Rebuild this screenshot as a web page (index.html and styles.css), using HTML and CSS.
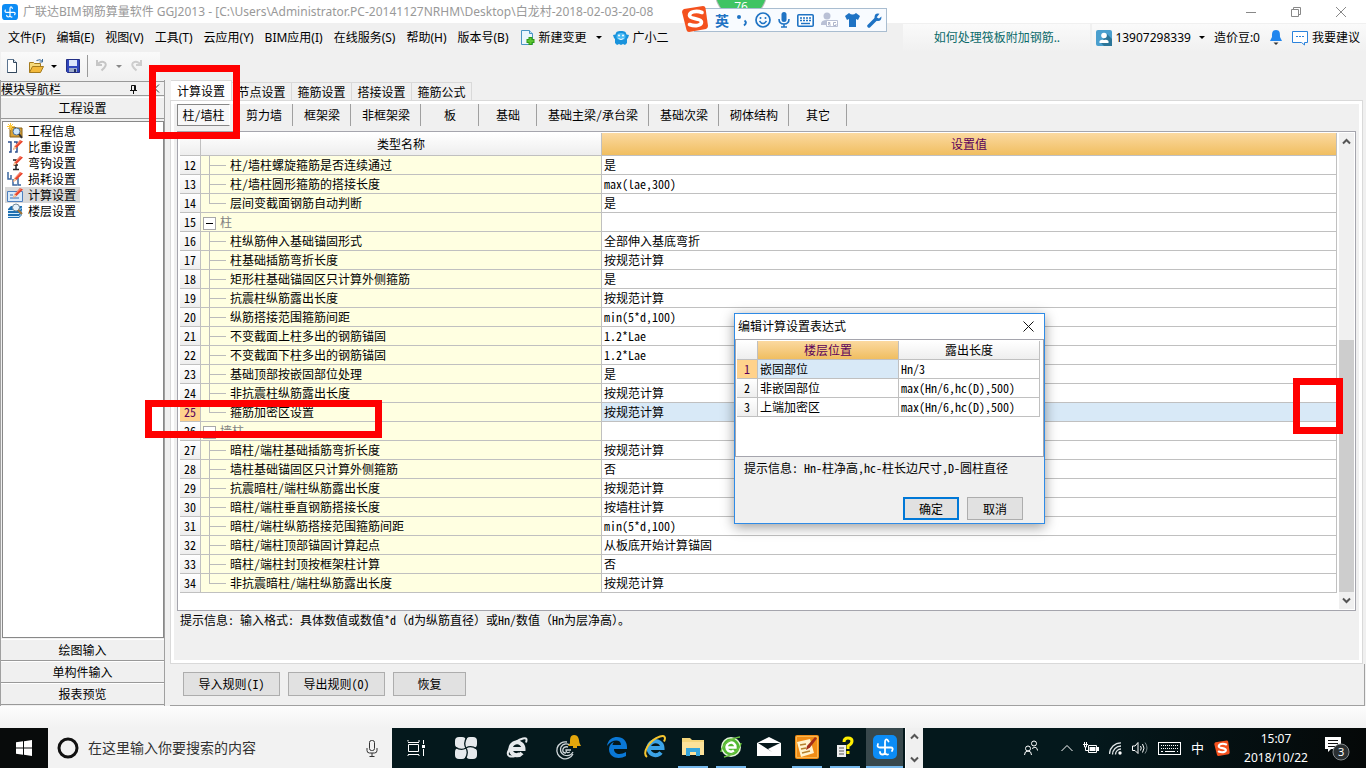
FILE: index.html
```html
<!DOCTYPE html>
<html lang="zh-CN">
<head>
<meta charset="utf-8">
<title>广联达BIM钢筋算量软件 GGJ2013</title>
<link rel="stylesheet" href="styles.css">
</head>
<body>
<svg class="defs" width="0" height="0" aria-hidden="true">
  <symbol id="bim" viewBox="0 0 24 24"><rect width="24" height="24" rx="5" fill="#0c8cf5"/><path d="M15.500 6.500Q14.500 4 13 4.500 12 5 12 7v10q0 2.500-2.500 2.500T7 17M5 9q-1.500 3.500 2 3.500h10.500q3.500 0 1.500 3.500M12 18q1 2 3 1.500" fill="none" stroke="#fff" stroke-width="1.800" stroke-linecap="round"/></symbol>
  <symbol id="sogou" viewBox="0 0 26 27"><path d="M2 4 21 1q2 0 2.500 2L26 21q0 2-2 3L7 27q-2 0-2.500-2L0 7q0-2 2-3z" fill="#f4511e"/><path d="M20 7.500C14 5 7.500 7 7.500 10.500c0 4 12 2.500 12 6.500 0 4-7 4.500-12 2.500" fill="none" stroke="#fff" stroke-width="3.600" stroke-linecap="round"/></symbol>
  <symbol id="pencil" viewBox="0 0 16 16"><path d="m6 11 1.500-4L13 1l3 1.500L9.500 9z" fill="#e8432c"/><path d="m8 7 6-5.500" stroke="#ff9b80"/><path d="m6 11 1.500-4 2 2z" fill="#f3d2a0"/></symbol>
</svg>

<header class="titlebar">
  <svg class="i16"><use href="#bim"/></svg>
  <span class="title">广联达BIM钢筋算量软件 GGJ2013 - [C:\Users\Administrator.PC-20141127NRHM\Desktop\白龙村-2018-02-03-20-08</span>
  <div class="winctl">
    <button aria-label="最小化"><svg width="12" height="12"><path d="M1 6.500h10" stroke="#888" fill="none"/></svg></button>
    <button aria-label="还原"><svg width="12" height="12"><path d="M1.500 3.500h7v7h-7zM3.500 3V1.500h7v7H9" stroke="#888" fill="none"/></svg></button>
    <button aria-label="关闭"><svg width="12" height="12"><path d="m1 1 10 10M11 1 1 11" stroke="#888" fill="none"/></svg></button>
  </div>
</header>

<nav class="menubar">
  <button>文件(F)</button><button>编辑(E)</button><button>视图(V)</button><button>工具(T)</button><button>云应用(Y)</button><button>BIM应用(I)</button><button>在线服务(S)</button><button>帮助(H)</button><button>版本号(B)</button>
  <button class="withicon"><svg width="15" height="17"><path d="M1.500 1.500h8l3 3v11h-11z" fill="#eaf5fd" stroke="#4a94c4"/><path d="M9.500 1.500v3h3" fill="#bfe0f5" stroke="#4a94c4"/><path d="M10.500 8v8M6.500 12h8" stroke="#2f9a16" stroke-width="4"/><path d="M10.500 9v6M7.500 12h6" stroke="#5cc533" stroke-width="2"/></svg>新建变更<i class="caret"></i></button>
  <button class="withicon"><svg width="16" height="16"><path d="M8 1c4 0 5 1 5.500 3.500L16 5l-1 3-1 1v4l-2 2-2-1-2 1-2-1-2 1-2-2V9L1 8 0 5l2.500-.5C3 2 4 1 8 1z" fill="#1993dc"/><ellipse cx="8" cy="6.500" rx="4.500" ry="3.500" fill="#4cbcf5"/><path d="M5.500 8.500q2.500 2 5 0" stroke="#fff" fill="none"/><circle cx="6" cy="5.500" r="1" fill="#fff"/><circle cx="10" cy="5.500" r="1" fill="#fff"/></svg>广小二</button>
  <a class="tip" href="#">如何处理筏板附加钢筋..</a>
  <div class="account">
    <button><svg width="16" height="16"><rect width="16" height="16" rx="2" fill="#4a9fce"/><path d="m5 13 6-9 5 5v7H8z" fill="#2c7699"/><circle cx="8" cy="5.500" r="2.800" fill="#fff"/><path d="M3.500 13V11q2-2 4.500-1 2.500-1 4.500 1v2z" fill="#fff"/></svg>13907298339<i class="caret"></i></button>
    <span>造价豆:0</span>
    <button aria-label="通知"><svg width="14" height="16"><path d="M7 0c4 0 4 3 4 7l2 4H1l2-4c0-4 0-7 4-7z" fill="#2186ee"/><path d="M4.500 12.500h5L7 15z" fill="#333"/></svg></button>
    <button><svg width="17" height="16"><path d="M.5 1.500h15v11h-3V15l-3-2.500h-9z" fill="#fff" stroke="#2b83dc"/><path d="M4 6.500h2m1 0h2m1 0h2" stroke="#2b83dc"/></svg>我要建议</button>
  </div>
</nav>

<div class="toolbar">
  <div class="tools">
    <button aria-label="新建"><svg width="16" height="16"><path d="M3.500 1.500h6l3 3v10h-9z" fill="#fff" stroke="#5b7490"/><path d="M9.500 1.500v3h3" fill="#d5e2ef" stroke="#33475c"/><path d="M12.500 4.500v10h-9" fill="none" stroke="#33475c"/></svg></button>
    <button aria-label="打开"><svg width="17" height="16"><path d="M1.500 14.500v-10h4l1 1h6v3" fill="#f6d97a" stroke="#a57b1e"/><path d="m1.500 14.500 3-6h11l-3 6z" fill="#f3b93b" stroke="#a57b1e"/><path d="M8.500 2.500q4-2 6 1m0-2.500v3h-3" fill="none" stroke="#3d6b99"/></svg><i class="caret"></i></button>
    <button aria-label="保存"><svg width="16" height="16"><path d="M1.500 1.500h13v13h-12l-1-1z" fill="#2f46bd" stroke="#232f85"/><path d="M4 2h8v6H4z" fill="#dce6fa"/><path d="M4 10h8v4H4z" fill="#9eacc9"/><path d="M9 11h2v3H9z" fill="#222f60"/></svg></button>
    <span class="vsep"></span>
    <button aria-label="撤销" disabled><svg width="16" height="16"><path d="M3 2v5h5M3 7q3-4 6.500-3 4 1.500 1 5.500l-3 3" fill="none" stroke="#c6c6c6" stroke-width="2"/></svg><i class="caret dim"></i></button>
    <button aria-label="重做" disabled><svg width="16" height="16"><path d="M13 2v5H8M13 7Q10 3 6.500 4q-4 1.500-1 5.500l3 3" fill="none" stroke="#cdcdcd" stroke-width="2"/></svg></button>
  </div>
</div>

<main class="work">
  <aside class="side">
    <div class="sidehead"><span>模块导航栏</span><button aria-label="固定"><svg width="9" height="10"><path d="M2.500 6V1.500h4V6M1 6.500h7M4.500 7v3M5.500 2v4" fill="none" stroke="#111"/></svg></button><button aria-label="收起"><svg width="6" height="9"><path d="M5 .5 1 4.500l4 4" fill="none" stroke="#333"/></svg></button></div>
    <button class="sidebtn">工程设置</button>
    <ul class="sidelist">
      <li><svg class="i16"><path d="M3 4h5l1 1h6v9H3z" fill="#d9a234" stroke="#86601b"/><path d="M1 1l5 5M6 1 1 6M3.500 0v7M0 3.500h7" stroke="#ffc83a"/><circle cx="9.500" cy="8.500" r="3.500" fill="#cfe8fb" stroke="#4b6f9a"/><path d="m12 11 3 4" stroke="#333" stroke-width="2"/></svg><span>工程信息</span></li>
      <li><svg class="i16"><path d="M1 3h3v10H2M7 3h3v10H8" fill="none" stroke="#2c4f8e" stroke-width="1.500"/><use href="#pencil" width="16" height="16"/></svg><span>比重设置</span></li>
      <li><svg class="i16"><path d="M6 5h3v9M6 14.500h6M7 10h4" fill="none" stroke="#222" stroke-width="1.500"/><use href="#pencil" width="16" height="16"/></svg><span>弯钩设置</span></li>
      <li><svg class="i16"><path d="M1 1v7h3V4M6 8v6h4M11 7v7h3" fill="none" stroke="#3b67a0" stroke-width="1.500"/><use href="#pencil" width="16" height="16"/></svg><span>损耗设置</span></li>
      <li class="on"><svg class="i16"><path d="M.5 4.500h15v10H.5z" fill="#d9ebfb" stroke="#4d7fbe"/><path d="M3 8h3m-3 3h9" stroke="#3b6fb0"/><use href="#pencil" width="16" height="16"/></svg><span>计算设置</span></li>
      <li><svg class="i16"><path d="m1 6 3-3h11v9l-3 3H1z" fill="#1d6fb2"/><path d="M1 7.500h11l3-3M1 10.500h11l3-3M1 13.500h11l3-3" fill="none" stroke="#d4ecfb"/><circle cx="9" cy="4.500" r="3.500" fill="#e6f2fa" stroke="#6c8596"/><path d="m11 7 4 4" stroke="#a37335" stroke-width="2"/></svg><span>楼层设置</span></li>
    </ul>
    <button class="sidebtn">绘图输入</button>
    <button class="sidebtn">单构件输入</button>
    <button class="sidebtn">报表预览</button>
  </aside>

  <section class="content">
    <div class="tabs"><button class="on">计算设置</button><button>节点设置</button><button>箍筋设置</button><button>搭接设置</button><button>箍筋公式</button></div>
    <div class="panel">
      <div class="subtabs"><button class="on">柱/墙柱</button><button>剪力墙</button><button>框架梁</button><button>非框架梁</button><button>板</button><button>基础</button><button>基础主梁/承台梁</button><button>基础次梁</button><button>砌体结构</button><button>其它</button></div>
      <div class="gridbox">
        <table class="grid main">
          <colgroup><col class="cnum"><col class="cname"><col></colgroup>
          <thead><tr><th></th><th>类型名称</th><th class="hot">设置值</th></tr></thead>
          <tbody>
            <tr><th>12</th><td class="leaf">柱/墙柱螺旋箍筋是否连续通过</td><td>是</td></tr>
            <tr><th>13</th><td class="leaf">柱/墙柱圆形箍筋的搭接长度</td><td>max(lae,300)</td></tr>
            <tr><th>14</th><td class="leaf last">层间变截面钢筋自动判断</td><td>是</td></tr>
            <tr><th>15</th><td class="group"><button aria-label="折叠"></button>柱</td><td></td></tr>
            <tr><th>16</th><td class="leaf">柱纵筋伸入基础锚固形式</td><td>全部伸入基底弯折</td></tr>
            <tr><th>17</th><td class="leaf">柱基础插筋弯折长度</td><td>按规范计算</td></tr>
            <tr><th>18</th><td class="leaf">矩形柱基础锚固区只计算外侧箍筋</td><td>是</td></tr>
            <tr><th>19</th><td class="leaf">抗震柱纵筋露出长度</td><td>按规范计算</td></tr>
            <tr><th>20</th><td class="leaf">纵筋搭接范围箍筋间距</td><td>min(5*d,100)</td></tr>
            <tr><th>21</th><td class="leaf">不变截面上柱多出的钢筋锚固</td><td>1.2*Lae</td></tr>
            <tr><th>22</th><td class="leaf">不变截面下柱多出的钢筋锚固</td><td>1.2*Lae</td></tr>
            <tr><th>23</th><td class="leaf">基础顶部按嵌固部位处理</td><td>是</td></tr>
            <tr><th>24</th><td class="leaf">非抗震柱纵筋露出长度</td><td>按规范计算</td></tr>
            <tr class="sel"><th>25</th><td class="leaf last">箍筋加密区设置</td><td>按规范计算</td></tr>
            <tr><th>26</th><td class="group"><button aria-label="折叠"></button>墙柱</td><td></td></tr>
            <tr><th>27</th><td class="leaf">暗柱/端柱基础插筋弯折长度</td><td>按规范计算</td></tr>
            <tr><th>28</th><td class="leaf">墙柱基础锚固区只计算外侧箍筋</td><td>否</td></tr>
            <tr><th>29</th><td class="leaf">抗震暗柱/端柱纵筋露出长度</td><td>按规范计算</td></tr>
            <tr><th>30</th><td class="leaf">暗柱/端柱垂直钢筋搭接长度</td><td>按墙柱计算</td></tr>
            <tr><th>31</th><td class="leaf">暗柱/端柱纵筋搭接范围箍筋间距</td><td>min(5*d,100)</td></tr>
            <tr><th>32</th><td class="leaf">暗柱/端柱顶部锚固计算起点</td><td>从板底开始计算锚固</td></tr>
            <tr><th>33</th><td class="leaf">暗柱/端柱封顶按框架柱计算</td><td>否</td></tr>
            <tr><th>34</th><td class="leaf last">非抗震暗柱/端柱纵筋露出长度</td><td>按规范计算</td></tr>
          </tbody>
        </table>
        <div class="scroll">
          <button aria-label="向上"><svg width="9" height="7"><path d="m1 5.500 3.500-3.500L8 5.500" fill="none" stroke="#555" stroke-width="2"/></svg></button>
          <div class="track"><div class="thumb"></div></div>
          <button aria-label="向下"><svg width="9" height="7"><path d="m1 1.500 3.500 3.500L8 1.500" fill="none" stroke="#555" stroke-width="2"/></svg></button>
        </div>
      </div>
      <p class="hint">提示信息: 输入格式: 具体数值或数值*d（d为纵筋直径）或Hn/数值（Hn为层净高）。</p>
    </div>
    <div class="actions"><button class="wide">导入规则(I)</button><button class="wide">导出规则(O)</button><button>恢复</button></div>
  </section>
</main>
<div class="filler"></div>

<footer class="taskbar">
  <button class="start" aria-label="开始"><svg width="16" height="16"><path d="M0 2.300 7 1.300v6.200H0zM8 1.200 16 0v7.500H8zM0 8.500h7v6.200l-7-1zM8 8.500h8V16l-8-1.200z" fill="#fff"/></svg></button>
  <label class="search">
    <svg width="22" height="22"><circle cx="11" cy="11" r="9" fill="none" stroke="#111" stroke-width="3"/></svg>
    <input type="text" placeholder="在这里输入你要搜索的内容" aria-label="搜索">
    <svg width="12" height="17"><rect x="3.500" y=".5" width="5" height="10" rx="2" fill="none" stroke="#333"/><path d="M1 8v2.500q0 2.500 2.500 2.500h5q2.500 0 2.500-2.500V8M6 13v3M3.500 16.500h5" fill="none" stroke="#333"/></svg>
  </label>
  <div class="pins">
    <button aria-label="任务视图"><svg width="18" height="16"><path d="M1 1.500V0M1 2.500h11M12 2V0M1 14.500h11M1 16v-1M12 16v-1M1.500 4.500h10v7h-10zM16.500 0v4M16.500 9v7" fill="none" stroke="#fff"/><rect x="15" y="5" width="3" height="3" fill="#fff"/></svg></button>
    <button aria-label="应用"><svg width="22" height="22" viewBox="0 0 22 22"><g fill="#e6e9ec"><rect width="11" height="11" rx="4"/><rect x="11" width="11" height="11" rx="4"/><rect y="11" width="11" height="11" rx="4"/><rect x="11" y="11" width="11" height="11" rx="4"/><rect x="7" y="7" width="8" height="8"/></g><path d="M11 11Q8 6 12 0M11 11q5-3 11 1M11 11q3 5-1 11M11 11q-5 3-11-1" fill="none" stroke="#04181c" stroke-width="1.300"/></svg></button>
    <button aria-label="浏览器"><svg width="24" height="24" viewBox="0 0 24 24"><path d="M6 13h12.500A6.500 6.500 0 1 0 17 17" fill="none" stroke="#e6e9ec" stroke-width="4"/><path d="M4 20C0 17 8 5 18 2.500c4-1 4 1 3 4M4 20q5 2 10-3" fill="none" stroke="#e6e9ec" stroke-width="2"/></svg></button>
    <button aria-label="提醒"><svg width="28" height="28" viewBox="0 0 28 28"><path d="M13 8A8.500 8.500 0 1 0 19 20M17 16h-5q0 4 4 2M16 11q-6-3-9 2-2 5 3 8 6 2 9-3M14 13q-4-1-5 2-1 4 3 4" fill="none" stroke="#cfd6d9" stroke-width="1.300"/><path d="M20 1c5 0 5 5 5.500 8l1.500 3H14l2-3c0-4 0-8 4-8z" fill="#e3a60c"/><path d="M19 13h4" stroke="#e3a60c" stroke-width="2"/></svg></button>
  </div>
  <div class="apps">
    <button aria-label="Edge"><svg width="22" height="22" viewBox="0 0 22 22"><path d="M1 10C2 3 7 1 11 1c6 0 10 4 10 10v2H8c0 6 7 6 12 3v4C13 24 3 22 3 13c0-3 2-6 5-7-1 1-1.500 2-1.500 3H15c0-6-9-6-14 1z" fill="#0a78d6"/></svg></button>
    <button aria-label="Internet Explorer"><svg width="24" height="24" viewBox="0 0 24 24"><path d="M7 13h12.500A7 7 0 1 0 18 17.500" fill="none" stroke="#3ba3e6" stroke-width="4"/><path d="M4 22C-1 18 6 5 17 1.500c5-1.500 6 1 4 5" fill="none" stroke="#f5c52f" stroke-width="2"/></svg></button>
    <button class="open" aria-label="文件资源管理器"><svg width="22" height="20" viewBox="0 0 22 20"><path d="M0 1h8l2 2h12v15H0z" fill="#f5d67c"/><path d="M0 5h22v13H0z" fill="#fce29a"/><path d="M4 19v-8h14v8h-4v-4H8v4z" fill="#36a6dc"/></svg></button>
    <button class="open" aria-label="360浏览器"><svg width="24" height="24" viewBox="0 0 24 24"><circle cx="12" cy="12" r="10" fill="#e6f5dd"/><circle cx="12" cy="12" r="8.500" fill="#52b832"/><path d="M7.500 12.500h9a4.500 4.500 0 1 0-1.500 3" fill="none" stroke="#fff" stroke-width="2.500"/><path d="M2 17C3 10 12 3 21 2M22 8c-1 7-10 13-17 14" fill="none" stroke="#6cc243" stroke-width="1.500"/></svg></button>
    <button aria-label="邮件"><svg width="24" height="20" viewBox="0 0 24 20"><path d="M0 6 12 0l12 6v13H0z" fill="#fff"/><path d="M1 6h22L11 12l4 3z" fill="#06181c"/></svg></button>
    <button class="open" aria-label="便签"><svg width="24" height="24" viewBox="0 0 24 24"><rect width="24" height="24" rx="2" fill="#f08c16"/><path d="M1.500 1.500h21v21h-21z" fill="none" stroke="#f9b64c"/><path d="m2 7 13-3 4 14-13 4z" fill="#fff3cf"/><path d="m5 10 6-1m-5 5 5-1m-4 5 8-2" stroke="#b6812e" stroke-width="1.500"/><path d="m11 15 1-4 8-9 2 1.500-7 9z" fill="#a32e19"/></svg></button>
    <button class="open" aria-label="帮助"><svg width="18" height="22" viewBox="0 0 18 22"><path d="M1 9h9v12H1z" fill="#eee"/><path d="M3 12h5m-5 3h5m-5 3h5" stroke="#555"/><path d="M8 6q0-4 4-4t4 3q0 3-4 5v3M12 15v3" fill="none" stroke="#ffef00" stroke-width="3"/></svg></button>
    <button class="open current" aria-label="广联达"><svg width="24" height="24"><use href="#bim"/></svg></button>
  </div>
  <div class="spin"><button aria-label="上一页"><svg width="9" height="7"><path d="m1 5.500 3.500-3.500L8 5.500" fill="none" stroke="#555" stroke-width="2"/></svg></button><button aria-label="下一页"><svg width="9" height="7"><path d="m1 1.500 3.500 3.500L8 1.500" fill="none" stroke="#555" stroke-width="2"/></svg></button></div>
  <div class="tray">
    <svg width="16" height="16"><circle cx="11" cy="3.500" r="2.500" fill="none" stroke="#fff"/><circle cx="5" cy="8.500" r="2.500" fill="none" stroke="#fff"/><path d="M1.500 15q0-4 3.500-4t3.500 4M9 8.500q5-3 5.500 2" fill="none" stroke="#fff"/></svg>
    <svg class="up" width="12" height="8"><path d="m.5 7 5.500-5.500L11.500 7" fill="none" stroke="#fff"/></svg>
    <svg width="16" height="12"><path d="M5.500 3.500h8v7h-8z" fill="none" stroke="#fff"/><path d="M6.500 5h6v4h-6z M14 5h2v4h-2z" fill="#fff"/><path d="M0 2.500h5M1.500 0v5h2V0M2.500 5v3.500h3" fill="none" stroke="#fff"/></svg>
    <svg width="13" height="13"><path d="M.5 12A11.500 11.500 0 0 1 12 .8M3.500 12.500A8.500 8.500 0 0 1 12 4M6.500 12.500A5.500 5.500 0 0 1 12 7" fill="none" stroke="#dfe5e6" stroke-width="1.300"/><circle cx="11" cy="11" r="1.700" fill="#fff"/></svg>
    <svg width="16" height="14"><path d="M.5 5h2.500l3-3.500v11L3 9.500H.5z" fill="none" stroke="#fff"/><path d="M8.500 5q1.500 2 0 4.500M10.500 3q3 4 0 8.500" fill="none" stroke="#fff"/><path d="M13 1.500q4 5.500 0 11" fill="none" stroke="#7d898c"/></svg>
    <svg width="23" height="13"><rect x=".5" y=".5" width="22" height="12" fill="none" stroke="#fff"/><path d="M3 3.500h17M3 6.500h17" stroke="#fff" stroke-dasharray="1 1"/><path d="M3 9.500h2m2 0h10m2 0h1" stroke="#fff"/></svg>
    <span class="ime">中</span>
    <svg width="16" height="16"><use href="#sogou"/></svg>
  </div>
  <div class="clock"><span>15:07</span><span>2018/10/22</span></div>
  <button class="notify" aria-label="通知中心"><svg width="25" height="25" viewBox="0 0 25 25"><path d="M0 1h16v12H6l-3 3v-3H0z" fill="#fff"/><path d="M3 4.500h10m-10 3h10m-10 3h7" stroke="#111"/><circle cx="16" cy="16" r="8" fill="#2b3032" stroke="#84898b"/></svg><span>3</span></button>
</footer>

<div class="ball">76</div>
<div class="imebar">
  <svg class="logo" width="26" height="27"><use href="#sogou"/></svg>
  <b>英</b>
  <svg width="12" height="16"><circle cx="3" cy="5" r="2" fill="#1f73c4"/><path d="M8.500 8.500q3 2-.5 5" fill="none" stroke="#1f73c4" stroke-width="2"/></svg>
  <svg width="16" height="16"><circle cx="8" cy="8" r="7" fill="none" stroke="#1f73c4" stroke-width="1.700"/><path d="M4.500 9q3.500 5 7 0" fill="none" stroke="#1f73c4" stroke-width="1.500"/><circle cx="5.500" cy="6" r="1" fill="#1f73c4"/><circle cx="10.500" cy="6" r="1" fill="#1f73c4"/></svg>
  <svg width="12" height="16"><rect x="3.500" width="5" height="10" rx="2.500" fill="#1f73c4"/><path d="M1 7q0 5 5 5t5-5M6 12v3M3 15h6" fill="none" stroke="#1f73c4" stroke-width="1.600"/></svg>
  <svg width="17" height="13"><rect x=".8" y=".8" width="15.400" height="11.400" rx="1" fill="#fff" stroke="#1f73c4" stroke-width="1.600"/><path d="M3 4h11M3 6.500h11" stroke="#1f73c4" stroke-width="1.400" stroke-dasharray="2 1"/><path d="M4 9.500h9" stroke="#1f73c4" stroke-width="1.400"/></svg>
  <svg width="17" height="16"><circle cx="6" cy="4" r="3.500" fill="#b9c0d5"/><path d="M0 12q0-4 6-4 4 0 5 2v3H0z" fill="#b9c0d5"/><path d="M5.500 8.500h11v6h-11z" fill="#fff" stroke="#b9c0d5"/><path d="M7 10.500h2v1H7.500v1.500H10M15 10.500h-2.500v3H15V12" fill="none" stroke="#aeb5cb"/></svg>
  <svg width="15" height="14"><path d="M4 0q3.500 3 7 0l4 3-2 4-2-1v8H4V6L2 7 0 3z" fill="#1f73c4"/></svg>
  <svg width="15" height="15"><path d="M2 13 9 6" stroke="#1f73c4" stroke-width="3.500" stroke-linecap="round"/><path d="M12.500.8Q8-.5 7.500 4q0 4 3.500 4t3.500-4.500L12 5.500 9.500 4.500z" fill="#1f73c4"/></svg>
</div>

<div class="dialog" role="dialog" aria-label="编辑计算设置表达式">
  <div class="dtitle"><span>编辑计算设置表达式</span><button aria-label="关闭"><svg width="11" height="11"><path d="m.5.5 10 10M10.500.5l-10 10" fill="none" stroke="#111"/></svg></button></div>
  <div class="dgrid">
    <table class="grid">
      <colgroup><col class="dnum"><col><col></colgroup>
      <thead><tr><th></th><th class="hot">楼层位置</th><th>露出长度</th></tr></thead>
      <tbody>
        <tr class="dsel"><th>1</th><td>嵌固部位</td><td>Hn/3</td></tr>
        <tr><th>2</th><td>非嵌固部位</td><td>max(Hn/6,hc(D),500)</td></tr>
        <tr><th>3</th><td>上端加密区</td><td>max(Hn/6,hc(D),500)</td></tr>
      </tbody>
    </table>
  </div>
  <p>提示信息: Hn-柱净高,hc-柱长边尺寸,D-圆柱直径</p>
  <div class="dbtns"><button class="ok">确定</button><button>取消</button></div>
</div>

<div class="mark m1"></div><div class="mark m2"></div><div class="mark m3"></div>
</body>
</html>
```
FILE: styles.css
```css
* { box-sizing: border-box; }
body { margin: 0; min-height: 100vh; display: flex; flex-direction: column; position: relative; overflow: hidden; background: #f0f0f0; color: #000; font: 12px/16px "Noto Sans Mono CJK SC", "Noto Sans CJK SC", sans-serif; }
button { font: inherit; color: inherit; border: 0; background: none; padding: 0; margin: 0; white-space: nowrap; }
svg { flex: none; display: block; }
p, ul { margin: 0; padding: 0; list-style: none; }
.defs { position: absolute; }
.i16 { width: 16px; height: 16px; }
.caret { flex: none; border: 3px solid transparent; border-top-color: #000; border-bottom: 0; }
.caret.dim { border-top-color: #888; }

.titlebar, .menubar, .taskbar { font-family: "Noto Sans", "Noto Sans CJK SC", sans-serif; }
.titlebar { height: 23px; background: #fff; display: flex; align-items: center; padding: 0 0 0 2px; gap: 5px; }
.title { color: #999; white-space: nowrap; flex: 1; }
.winctl { display: flex; padding-right: 3px; }
.winctl button { width: 45px; display: flex; justify-content: center; }

.menubar { height: 29px; display: flex; align-items: center; padding-left: 8px; gap: 11px; }
.menubar button { display: flex; align-items: center; gap: 3px; }
.menubar .withicon { gap: 4px; }
.menubar .caret { margin: 0 0 0 5px; }
.tip { margin-left: auto; width: 187px; text-align: center; color: #0a6a6a; text-decoration: none; line-height: 28px; background: linear-gradient(#fafafa, #f0f0f0); }
.account { display: flex; align-items: center; gap: 9px; height: 28px; padding: 0 6px 0 4px; margin-left: -9px; background: linear-gradient(#fafafa, #f0f0f0); }

.toolbar { height: 28px; display: flex; padding-left: 1px; }
.tools { display: flex; align-items: center; gap: 8px; width: 159px; padding-left: 3px; background: linear-gradient(#fafafa, #f0f0f0); }
.tools button { display: flex; align-items: center; gap: 6px; }
.tools button:nth-child(n+5) { margin-left: -2px; }
.vsep { width: 1px; height: 22px; margin-left: -2px; background: #999; }

.work { flex: 1; display: flex; gap: 5px; padding-right: 1px; }
.side { width: 165px; display: flex; flex-direction: column; padding: 1px 0; border-left: 1px solid #a0a0a0; border-right: 1px solid #a0a0a0; }
.sidehead { display: flex; align-items: center; height: 15px; border: 1px solid #999; border-width: 1px 0; gap: 16px; padding-right: 4px; margin-bottom: 1px; }
.sidehead span { flex: 1; }
.sidebtn { height: 22px; line-height: 20px; border-top: 1px solid #fff; border-bottom: 1px solid #999; text-align: center; background: #f0f0f0; }
.sidelist { flex: 1; background: #fff; border: 1px solid #888; margin: 2px 0 1px 1px; padding: 1px 2px; }
.sidelist li { display: flex; width: 75px; height: 16px; gap: 5px; padding-left: 2px; }
.sidelist .on { background: #d9d9d9; }

.content { flex: 1; display: flex; flex-direction: column; min-width: 0; }
.tabs { display: flex; align-items: flex-end; height: 20px; padding-left: 1px; }
.tabs button { width: 60px; height: 18px; border: 1px solid #d9d9d9; border-width: 1px 1px 0 0; }
.tabs .on { width: 61px; height: 20px; background: #fff; }
.panel { flex: 1; border: 1px solid #d9d9d9; outline: 3px solid #fff; outline-offset: -4px; margin-right: 2px; padding: 3px 6px; display: flex; flex-direction: column; }
.subtabs { display: flex; height: 22px; margin-bottom: 5px; }
.subtabs button { min-width: 58px; padding: 0 10px 0 10px; border-right: 1px solid #a0a0a0; line-height: 20px; }
.subtabs button:nth-child(n+2) { padding-left: 11px; }
.subtabs .on { min-width: 53px; padding: 0 4px; margin-right: 5px; border: 1px solid #888; border-right-color: #fff; background: #f8f8f8; }
.gridbox { flex: 1; display: flex; align-items: flex-start; background: #fff; border: 1px solid #a5a5ad; padding: 1px 1px 1px 2px; gap: 2px; }
.grid { table-layout: fixed; border-spacing: 0; flex: 1; width: 100%; }
.cnum { width: 21px; } .cname { width: 401px; }
.grid th, .grid td { height: 19px; line-height: 18px; padding: 0 2px; border: 1px solid #c0c0c0; border-width: 0 1px 1px 0; font-weight: normal; text-align: left; white-space: nowrap; overflow: hidden; }
.grid th { text-align: center; background: linear-gradient(#fff, #eee); padding: 0; }
.main thead th { height: 23px; }
.grid thead .hot { background: linear-gradient(#fbd9a0, #f0be60); color: #5a005a; }
.main .leaf { padding-left: 29px; background: linear-gradient(#bbb, #bbb) 8px 0 / 1px 100% no-repeat, linear-gradient(#bbb, #bbb) 8px 9px / 17px 1px no-repeat #ffffe1; }
.main .last { background-size: 1px 9px, 17px 1px; }
.main .group { background: #ffffe1; color: #808080; }
.group button { display: inline-block; width: 13px; height: 13px; border: 1px solid #a8a8a8; background: linear-gradient(#000, #000) center / 7px 1px no-repeat #fff; margin-right: 4px; vertical-align: middle; }
.sel th, .dsel th { background: #ffd28c !important; color: #5a005a; }
.sel td:last-child, .dsel td:nth-child(2) { background: #d8e9f7; }
.scroll { width: 15px; align-self: stretch; display: flex; flex-direction: column; background: #f0f0f0; }
.scroll button { height: 17px; display: flex; align-items: center; justify-content: center; }
.track { flex: 1; display: flex; flex-direction: column; justify-content: flex-end; }
.thumb { height: 57%; background: #cdcdcd; }
.hint { height: 49px; padding: 1px 3px; }
.actions { display: flex; gap: 8px; padding: 8px 13px 9px; border: 1px solid #a0a0a0; border-width: 0 1px 1px 0; }
.actions button, .dbtns button { width: 73px; height: 24px; line-height: 20px; border: 1px solid #adadad; background: #e1e1e1; }
.actions .wide { width: 97px; }
.filler { height: 22px; background: linear-gradient(#fdfdfd, #f2f2f2); }

.taskbar { height: 40px; display: flex; align-items: stretch; background: linear-gradient(90deg, #04181c 80%, #050808); color: #fff; }
.taskbar button { display: flex; align-items: center; justify-content: center; }
.start { width: 48px; background: #080b0b; }
.search { width: 344px; display: flex; align-items: center; background: #f2f2f2; padding: 0 14px 0 9px; gap: 9px; }
.search input { flex: 1; min-width: 0; border: 0; background: none; outline: 0; padding: 0; font: 14px/20px "Open Sans", "Noto Sans CJK SC", sans-serif; }
.search input::placeholder { color: #333; opacity: 1; }
.pins { display: flex; }
.pins button { width: 51px; }
.pins button:first-child { width: 48px; }
.apps { display: flex; gap: 8px; padding-left: 9px; }
.apps button { width: 30px; border-bottom: 2px solid transparent; }
.apps .open { border-bottom-color: #76b9ed; }
.apps .current { width: 37px; background: #38484c; margin-left: -2px; }
.spin { width: 18px; margin-left: 2px; background: #f0f0f0; display: flex; flex-direction: column; justify-content: space-between; align-items: center; padding: 5px 0; border-left: 1px solid #fff; }
.tray { margin-left: auto; display: flex; align-items: center; gap: 10px; }
.tray .up { margin-left: 12px; }
.ime { font-size: 13px; }
.clock { display: flex; flex-direction: column; align-items: center; justify-content: center; width: 92px; line-height: 19px; }
.taskbar .notify { width: 44px; position: relative; justify-content: flex-start; padding-left: 3px; }
.notify span { position: absolute; left: 16px; top: 16px; font-size: 11px; line-height: 16px; }

.ball { position: absolute; left: 716px; top: -32px; width: 50px; height: 50px; border-radius: 50%; background: #3fc463; box-shadow: 0 0 0 1px #bbb; color: #fff; text-align: center; padding-top: 32px; line-height: 14px; font-family: "Open Sans", sans-serif; }
.imebar { position: absolute; left: 694px; top: 8px; width: 193px; height: 24px; display: flex; align-items: center; justify-content: space-between; padding: 0 4px 0 20px; background: #f8fbff; border: 1px solid #a9bdd0; }
.imebar .logo { position: absolute; left: -13px; top: -4px; }
.imebar b { color: #1f73c4; font-size: 14px; }

.dialog { position: absolute; left: 734px; top: 313px; width: 311px; background: #f0f0f0; border: 1px solid #2f8be6; box-shadow: 0 3px 12px rgba(0, 0, 0, .4); }
.dtitle { display: flex; align-items: center; justify-content: space-between; height: 25px; background: #fff; padding: 0 10px 0 3px; font-family: "Open Sans", "Noto Sans CJK SC", sans-serif; }
.dgrid { height: 118px; background: #fff; border: 1px solid #a5a5ad; padding: 1px 3px 0 1px; }
.dnum { width: 21px; }
.dialog p { padding: 3px 9px; height: 40px; }
.dbtns { display: flex; justify-content: flex-end; gap: 8px; padding: 0 21px 3px; }
.dbtns button { width: 56px; height: 23px; }
.dbtns .ok { border: 2px solid #0078d7; }

.mark { position: absolute; border: 7px solid #f00; pointer-events: none; }
.m1 { left: 149px; top: 65px; width: 91px; height: 74px; }
.m2 { left: 145px; top: 400px; width: 237px; height: 38px; }
.m3 { left: 1293px; top: 378px; width: 50px; height: 56px; }
```
